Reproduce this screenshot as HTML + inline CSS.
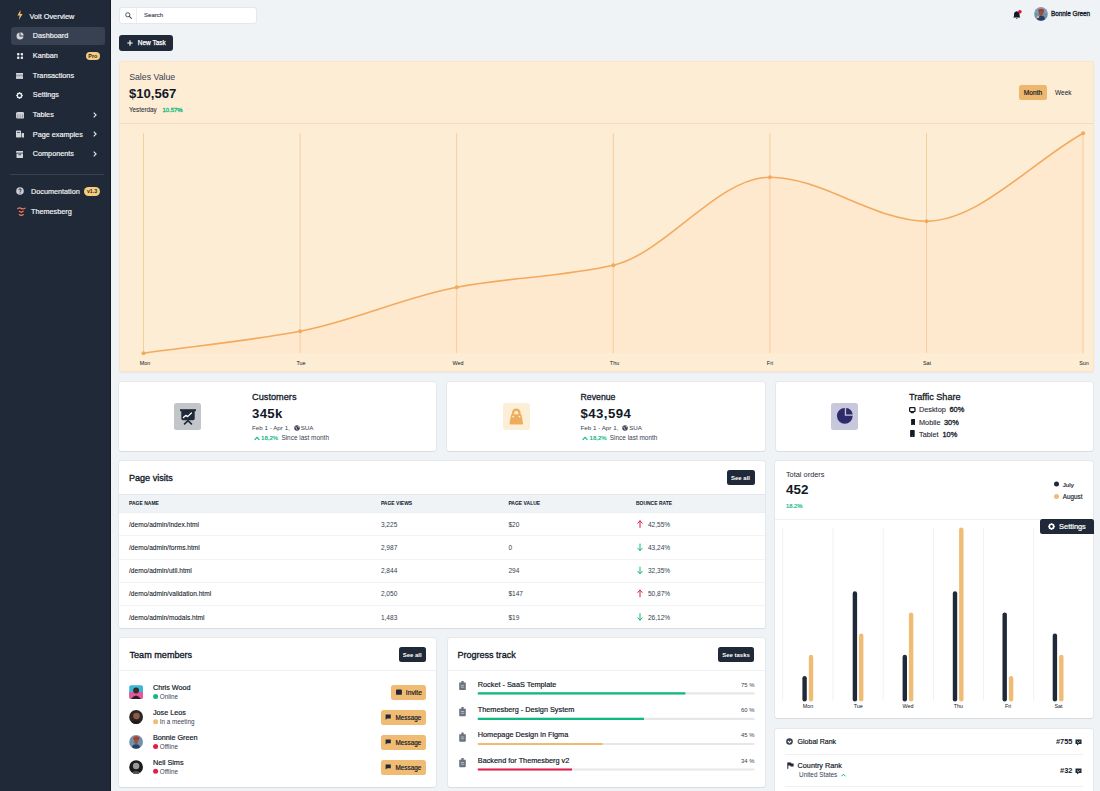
<!DOCTYPE html>
<html><head><meta charset="utf-8">
<style>
*{margin:0;padding:0;box-sizing:border-box}
html,body{width:1100px;height:791px;overflow:hidden;background:#eff3f6;font-family:"Liberation Sans",sans-serif;color:#1f2937}
.a{position:absolute}
.t{position:absolute;line-height:0;white-space:nowrap}
.sb{position:absolute;left:0;top:0;width:111px;height:791px;background:#1f2937;border-right:1px solid #141b26}
.nav{color:#f3f4f6;font-size:7.25px;-webkit-text-stroke:0.18px currentColor}
.card{position:absolute;background:#fff;border-radius:2.5px;box-shadow:0 0 0 1px rgba(0,0,0,0.04),0 1px 1px rgba(0,0,0,0.05)}
.btn{position:absolute;background:#1f2937;color:#fff;border-radius:2.5px;font-weight:bold;font-size:5.6px;text-align:center}
.sbtn{position:absolute;background:#f0bc74;color:#1f2937;border-radius:2.5px;font-size:5.8px}
</style></head><body>
<!-- SIDEBAR -->
<div class="sb">
  <svg class="a" style="left:17px;top:10px" width="6" height="10" viewBox="0 0 6 10"><path d="M3.6 0 L0.4 5.6 L2.7 5.6 L1.8 10 L5.6 3.9 L3.3 3.9 Z" fill="#f0bc74"/></svg>
  <div class="t nav" style="left:29.5px;top:16.8px;font-size:7.33px">Volt Overview</div>
  <div class="a" style="left:10.5px;top:27px;width:94.5px;height:17.5px;background:#374151;border-radius:3px"></div>
  <svg class="a" style="left:16px;top:32px" width="8" height="8" viewBox="0 0 8 8"><path d="M3.5 0.5 A3.5 3.5 0 1 0 7.5 4.5 L3.5 4.5 Z" fill="#d1d5db"/><path d="M4.5 0.3 A3.5 3.5 0 0 1 7.7 3.5 L4.5 3.5 Z" fill="#d1d5db"/></svg>
  <div class="t nav" style="left:32.8px;top:36.2px">Dashboard</div>
  <svg class="a" style="left:16.7px;top:53.1px" width="6.2" height="6" viewBox="0 0 6.2 6" fill="#e5e7eb"><rect x="0" y="0" width="2.5" height="2.4" rx="0.8"/><rect x="3.7" y="0" width="2.5" height="2.4" rx="0.8"/><rect x="0" y="3.6" width="2.5" height="2.4" rx="0.8"/><rect x="3.7" y="3.6" width="2.5" height="2.4" rx="0.8"/></svg>
  <div class="t nav" style="left:32.8px;top:55.5px">Kanban</div>
  <div class="a" style="left:85.5px;top:51.6px;width:14.5px;height:8.8px;background:#f6cd7c;border-radius:4.4px"></div>
  <div class="t" style="left:92.8px;top:56px;font-size:5.4px;font-weight:bold;color:#1f2937;transform:translateX(-50%)">Pro</div>
  <svg class="a" style="left:16.1px;top:72.8px" width="7.4" height="5.8" viewBox="0 0 7.4 5.8"><rect x="0" y="0" width="7.4" height="5.8" rx="0.8" fill="#9ca3af"/><rect x="0" y="0" width="7.4" height="1.6" rx="0.6" fill="#d1d5db"/><rect x="0" y="3.6" width="7.4" height="2.2" rx="0.6" fill="#d1d5db"/></svg>
  <div class="t nav" style="left:32.8px;top:75.6px">Transactions</div>
  <svg class="a" style="left:16.4px;top:92.4px" width="7" height="7" viewBox="0 0 7 7"><circle cx="3.5" cy="3.5" r="2.2" fill="none" stroke="#e5e7eb" stroke-width="1.4"/><g stroke="#e5e7eb" stroke-width="1.2"><path d="M3.5 0.2v1.3M3.5 5.5v1.3M0.2 3.5h1.3M5.5 3.5h1.3M1.2 1.2l0.9 0.9M4.9 4.9l0.9 0.9M1.2 5.8l0.9-0.9M4.9 2.1l0.9-0.9"/></g></svg>
  <div class="t nav" style="left:32.8px;top:95px">Settings</div>
  <svg class="a" style="left:15.9px;top:112px" width="8.2" height="6.6" viewBox="0 0 8.2 6.6"><rect x="0" y="0" width="8.2" height="6.6" rx="1.6" fill="#d1d5db"/><rect x="0.9" y="2.2" width="6.4" height="3.5" rx="0.5" fill="#9ca3af"/><rect x="2.6" y="2.2" width="0.8" height="3.5" fill="#e5e7eb"/><rect x="4.8" y="2.2" width="0.8" height="3.5" fill="#e5e7eb"/></svg>
  <div class="t nav" style="left:32.8px;top:114.6px">Tables</div>
  <svg class="a" style="left:92.5px;top:111.5px" width="4" height="6" viewBox="0 0 4 6"><path d="M0.7 0.6 L3.1 3 L0.7 5.4" fill="none" stroke="#e5e7eb" stroke-width="1.1"/></svg>
  <svg class="a" style="left:16px;top:130px" width="8" height="8" viewBox="0 0 8 8" fill="#d1d5db"><rect x="0" y="0.5" width="5" height="7" rx="0.8"/><rect x="5.6" y="3" width="2.4" height="4.5" rx="0.5"/><rect x="1" y="2" width="3" height="0.7" fill="#1f2937"/></svg>
  <div class="t nav" style="left:32.8px;top:134.5px">Page examples</div>
  <svg class="a" style="left:92.5px;top:131px" width="4" height="6" viewBox="0 0 4 6"><path d="M0.7 0.6 L3.1 3 L0.7 5.4" fill="none" stroke="#e5e7eb" stroke-width="1.1"/></svg>
  <svg class="a" style="left:15.9px;top:150.7px" width="7.6" height="6.9" viewBox="0 0 7.6 6.9" fill="#d1d5db"><rect x="0" y="0" width="7.6" height="1.8" rx="0.4"/><rect x="0.5" y="2.4" width="6.6" height="4.5" rx="0.4"/><rect x="2.5" y="3.4" width="2.6" height="0.8" fill="#1f2937"/></svg>
  <div class="t nav" style="left:32.8px;top:154.3px">Components</div>
  <svg class="a" style="left:92.5px;top:151px" width="4" height="6" viewBox="0 0 4 6"><path d="M0.7 0.6 L3.1 3 L0.7 5.4" fill="none" stroke="#e5e7eb" stroke-width="1.1"/></svg>
  <div class="a" style="left:10px;top:174px;width:94px;height:1px;background:#374151"></div>
  <svg class="a" style="left:15.8px;top:187.3px" width="8" height="8" viewBox="0 0 8 8"><circle cx="4" cy="4" r="3.8" fill="#c9ced6"/><path d="M2.8 3.1 Q2.9 1.9 4 1.9 Q5.2 1.9 5.2 3 Q5.2 3.8 4.2 4.2 L4.2 4.9" fill="none" stroke="#1f2937" stroke-width="0.9"/><circle cx="4.1" cy="6" r="0.55" fill="#1f2937"/></svg>
  <div class="t nav" style="left:31px;top:191.5px">Documentation</div>
  <div class="a" style="left:84px;top:186.8px;width:16px;height:9px;background:#f6cd7c;border-radius:4.5px"></div>
  <div class="t" style="left:92px;top:191.2px;font-size:5.2px;color:#1f2937;transform:translateX(-50%);font-weight:bold">v1.3</div>
  <svg class="a" style="left:17px;top:206.5px" width="9" height="10" viewBox="0 0 9 10" fill="none" stroke="#f2785c" stroke-width="1.2" stroke-linecap="round"><path d="M0.8 1.6 Q2.5 0.3 4.3 1.4 Q6.2 2.4 8 1.2"/><path d="M2.3 4.3 L4.3 5.3 L6.3 4.3"/><path d="M2.3 7.6 L4.3 8.6 L6.3 7.6"/></svg>
  <div class="t nav" style="left:31px;top:211.5px">Themesberg</div>
</div>
<!-- TOPNAV -->
<div class="a" style="left:119px;top:6.5px;width:138px;height:17px;background:#fff;border:1px solid #e5e7eb;border-radius:3px"></div>
<div class="a" style="left:136px;top:7px;width:1px;height:16px;background:#eceef1"></div>
<svg class="a" style="left:124.5px;top:12px" width="7" height="7" viewBox="0 0 7 7"><circle cx="2.8" cy="2.8" r="2.1" fill="none" stroke="#4b5563" stroke-width="1"/><path d="M4.4 4.4 L6.4 6.4" stroke="#4b5563" stroke-width="1.1" stroke-linecap="round"/></svg>
<div class="t" style="left:144px;top:15.4px;font-size:6.05px;color:#4b5563;-webkit-text-stroke:0.18px currentColor;">Search</div>
<svg class="a" style="left:1012.5px;top:9.5px" width="9" height="10" viewBox="0 0 9 10"><path d="M3.7 1.2 Q1 1.7 1 4.5 L1 6.3 L0.2 7.6 L7.4 7.6 L6.6 6.3 L6.6 4.5 Q6.6 1.7 3.9 1.2 Z" fill="#111827"/><path d="M2.7 8.3 Q3.8 9.8 4.9 8.3 Z" fill="#111827"/><circle cx="6.9" cy="1.8" r="1.8" fill="#e3132f"/></svg>
<svg class="a" style="left:1034px;top:7.2px" width="14" height="14" viewBox="0 0 14 14"><defs><clipPath id="av0"><circle cx="7" cy="7" r="6.8"/></clipPath></defs><g clip-path="url(#av0)"><rect width="14" height="14" fill="#6f93ad"/><rect x="0" y="0" width="14" height="6" fill="#7da2b8"/><ellipse cx="7.2" cy="4" rx="3" ry="2.3" fill="#b23a2a"/><ellipse cx="7" cy="6.5" rx="2" ry="2.5" fill="#8a5a44"/><path d="M2 14 L4 9.5 Q7 8 10 9.5 L12 14 Z" fill="#2a3f66"/><circle cx="4" cy="10" r="1.3" fill="#d9b08c"/></g></svg>
<div class="t" style="left:1051px;top:14.3px;font-size:6.35px;color:#111827;-webkit-text-stroke:0.3px currentColor">Bonnie Green</div>
<!-- NEW TASK -->
<div class="btn" style="left:119px;top:34.6px;width:54px;height:16.4px;border-radius:3px"></div>
<svg class="a" style="left:127px;top:39.8px" width="6" height="6" viewBox="0 0 6 6"><path d="M3 0.3V5.7M0.3 3H5.7" stroke="#fff" stroke-width="1.1"/></svg>
<div class="t" style="left:137.8px;top:43.1px;font-size:6.5px;color:#fff;-webkit-text-stroke:0.25px #fff">New Task</div>
<!-- SALES CARD -->
<div class="a" style="left:118.6px;top:61.3px;width:975px;height:310.5px;background:#feedd5;border-radius:2.5px;box-shadow:inset 0 0 0 1px rgba(240,170,90,0.12),0 1px 2px rgba(0,0,0,0.05)"></div>
<div class="t" style="left:129.2px;top:76.5px;font-size:8.74px;color:#374151">Sales Value</div>
<div class="t" style="left:129px;top:93.7px;font-size:13.1px;font-weight:bold;color:#111827">$10,567</div>
<div class="t" style="left:129px;top:110px;font-size:6.3px;color:#1f2937;-webkit-text-stroke:0.06px currentColor">Yesterday</div>
<div class="t" style="left:162.5px;top:110px;font-size:5.95px;color:#10b981;-webkit-text-stroke:0.3px currentColor">10.57%</div>
<div class="a" style="left:1019px;top:84.7px;width:28px;height:15.1px;background:#edb86e;border-radius:2.5px"></div>
<div class="t" style="left:1033px;top:93.1px;font-size:6.6px;color:#111827;transform:translateX(-50%);-webkit-text-stroke:0.18px currentColor;">Month</div>
<div class="t" style="left:1055px;top:93.1px;font-size:6.5px;color:#111827">Week</div>
<div class="a" style="left:118.6px;top:123px;width:975px;height:1px;background:#f2dcc0"></div>
<svg class="a" style="left:0;top:0" width="1100" height="380" viewBox="0 0 1100 380">
 <path d="M143.5,353.2 C195.7,345.9 247.9,341.0 300.1,331.2 C352.3,321.4 404.5,297.0 456.7,287.2 C508.9,277.4 561.1,276.9 613.3,265.2 C665.5,253.5 717.7,177.2 769.9,177.2 C822.1,177.2 874.3,221.2 926.5,221.2 C978.7,221.2 1030.9,162.5 1083.1,133.2 L1083.1,353.2 L143.5,353.2 Z" fill="#fee8ce"/>
 <g stroke="#f6cd9c" stroke-width="1">
  <path d="M143.5 133.2V353.2M300.1 133.2V353.2M456.7 133.2V353.2M613.3 133.2V353.2M769.9 133.2V353.2M926.5 133.2V353.2M1083.1 133.2V353.2"/>
 </g>
 <path d="M143.5,353.2 C195.7,345.9 247.9,341.0 300.1,331.2 C352.3,321.4 404.5,297.0 456.7,287.2 C508.9,277.4 561.1,276.9 613.3,265.2 C665.5,253.5 717.7,177.2 769.9,177.2 C822.1,177.2 874.3,221.2 926.5,221.2 C978.7,221.2 1030.9,162.5 1083.1,133.2" fill="none" stroke="#f2aa5e" stroke-width="1.6"/>
 <g fill="#f2aa5e">
<circle cx="143.5" cy="353.2" r="2"/>
<circle cx="300.1" cy="331.2" r="2"/>
<circle cx="456.7" cy="287.2" r="2"/>
<circle cx="613.3" cy="265.2" r="2"/>
<circle cx="769.9" cy="177.2" r="2"/>
<circle cx="926.5" cy="221.2" r="2"/>
<circle cx="1083.1" cy="133.2" r="2"/>
 </g>
 <g font-family="Liberation Sans" font-size="5.4" fill="#111827" text-anchor="middle">
  <text x="145" y="364.7">Mon</text><text x="301" y="364.7">Tue</text><text x="458" y="364.7">Wed</text><text x="614.5" y="364.7">Thu</text><text x="770" y="364.7">Fri</text><text x="927" y="364.7">Sat</text><text x="1084" y="364.7">Sun</text>
 </g>
</svg>
<!-- STAT CARDS -->
<div class="card" style="left:118.6px;top:382.4px;width:317.8px;height:69px"></div>
<div class="card" style="left:447.2px;top:382.4px;width:317.8px;height:69px"></div>
<div class="card" style="left:775.8px;top:382.4px;width:317.6px;height:69px"></div>
<!-- customers -->
<div class="a" style="left:174.4px;top:403.2px;width:27px;height:27px;background:#c2c5ca;border-radius:2.5px"></div>
<svg class="a" style="left:179.9px;top:409.4px" width="16" height="15.5" viewBox="0 0 16 15.5"><rect x="0" y="0.2" width="16" height="2" fill="#1f2937"/><path d="M1.3 2 H14.7 V9.6 Q14.7 11.2 13.1 11.2 H2.9 Q1.3 11.2 1.3 9.6 Z" fill="#1f2937"/><path d="M3.4 8.6 L5.8 6.4 L7.6 7.6 L11.4 4" fill="none" stroke="#fff" stroke-width="1.3" stroke-linecap="round" stroke-linejoin="round"/><path d="M4.6 14.8 L8 11.6 L11.4 14.8" fill="none" stroke="#1f2937" stroke-width="1.7" stroke-linecap="round"/></svg>
<div class="t" style="left:252.1px;top:396.7px;font-size:9.2px;color:#111827;-webkit-text-stroke:0.28px currentColor">Customers</div>
<div class="t" style="left:252px;top:414px;font-size:13.2px;letter-spacing:0.35px;font-weight:bold;color:#111827">345k</div>
<div class="t" style="left:252px;top:427.7px;font-size:6.25px;color:#374151">Feb 1 - Apr 1,</div><div class="t" style="left:300.7px;top:427.7px;font-size:6.25px;color:#374151">SUA</div>
<svg class="a" style="left:293.6px;top:424.6px" width="6" height="6" viewBox="0 0 6 6"><circle cx="3" cy="3" r="2.75" fill="#374151"/><path d="M1.3 2 Q2.6 2.2 2.4 3.4 L3.2 4.8 M3.4 0.9 Q3.9 2 5.1 2" fill="none" stroke="#fff" stroke-width="0.75"/></svg>
<svg class="a" style="left:253.5px;top:435.5px" width="6" height="5" viewBox="0 0 6 5"><path d="M0.6 3.8 L3 1.4 L5.4 3.8" fill="none" stroke="#10b981" stroke-width="1.1"/></svg>
<div class="t" style="left:261px;top:438.3px;font-size:6.1px;color:#10b981;font-weight:bold">18,2%</div>
<div class="t" style="left:281.4px;top:438.3px;font-size:6.44px;color:#374151">Since last month</div>
<!-- revenue -->
<div class="a" style="left:502.7px;top:403.2px;width:27px;height:27px;background:#fdeed8;border-radius:2.5px"></div>
<svg class="a" style="left:508.9px;top:407.8px" width="14.6" height="17" viewBox="0 0 14.6 17"><path d="M4.1 7.5 V5.2 Q4.1 1.6 7.3 1.6 Q10.5 1.6 10.5 5.2 V7.5" fill="none" stroke="#eead5c" stroke-width="2.1"/><path d="M2.2 6.3 H12.4 L14 15 Q14.1 16.6 12.6 16.6 H2 Q0.5 16.6 0.6 15 Z" fill="#eead5c"/><circle cx="4.1" cy="8.6" r="0.95" fill="#fdeed8"/><circle cx="10.5" cy="8.6" r="0.95" fill="#fdeed8"/></svg>
<div class="t" style="left:580.5px;top:396.8px;font-size:8.74px;color:#111827;-webkit-text-stroke:0.28px currentColor">Revenue</div>
<div class="t" style="left:580.5px;top:414px;font-size:13.2px;letter-spacing:0.45px;font-weight:bold;color:#111827">$43,594</div>
<div class="t" style="left:580.5px;top:427.7px;font-size:6.25px;color:#374151">Feb 1 - Apr 1,</div><div class="t" style="left:629.2px;top:427.7px;font-size:6.25px;color:#374151">SUA</div>
<svg class="a" style="left:622.1px;top:424.6px" width="6" height="6" viewBox="0 0 6 6"><circle cx="3" cy="3" r="2.75" fill="#374151"/><path d="M1.3 2 Q2.6 2.2 2.4 3.4 L3.2 4.8 M3.4 0.9 Q3.9 2 5.1 2" fill="none" stroke="#fff" stroke-width="0.75"/></svg>
<svg class="a" style="left:582px;top:435.5px" width="6" height="5" viewBox="0 0 6 5"><path d="M0.6 3.8 L3 1.4 L5.4 3.8" fill="none" stroke="#10b981" stroke-width="1.1"/></svg>
<div class="t" style="left:589.5px;top:438.3px;font-size:6.1px;color:#10b981;font-weight:bold">18,2%</div>
<div class="t" style="left:609.8px;top:438.3px;font-size:6.44px;color:#374151">Since last month</div>
<!-- traffic -->
<div class="a" style="left:830.9px;top:403.2px;width:27.3px;height:27px;background:#c8c8dc;border-radius:2.5px"></div>
<svg class="a" style="left:836px;top:407px" width="18" height="18" viewBox="0 0 18 18"><path d="M8.8 0.9 A7.9 7.9 0 1 0 16.7 8.8 L8.8 8.8 Z" fill="#2e2b6b"/><path d="M10.1 1.1 A6.6 6.6 0 0 1 16.6 7.6 L10.1 7.6 Z" fill="#2e2b6b"/></svg>
<div class="t" style="left:909px;top:396.8px;font-size:9.1px;color:#111827;-webkit-text-stroke:0.28px currentColor">Traffic Share</div>
<svg class="a" style="left:909.4px;top:407.3px" width="6.6" height="6.3" viewBox="0 0 6.6 6.3"><rect x="0.65" y="0.65" width="5.3" height="3.9" rx="0.7" fill="none" stroke="#111827" stroke-width="1.3"/><path d="M1.8 5.6 H4.8" stroke="#111827" stroke-width="1.2"/></svg>
<div class="t" style="left:919px;top:410.3px;font-size:7.3px;color:#1f2937;-webkit-text-stroke:0.1px currentColor">Desktop</div>
<div class="t" style="left:949.5px;top:410.3px;font-size:7.4px;color:#111827;-webkit-text-stroke:0.3px currentColor">60%</div>
<svg class="a" style="left:910.5px;top:419px" width="4.4" height="6.4" viewBox="0 0 4.4 6.4"><rect x="0.1" y="0.1" width="4.2" height="6.2" rx="0.6" fill="#111827"/><rect x="1.7" y="5" width="1" height="0.6" fill="#9ca3af"/></svg>
<div class="t" style="left:919px;top:422.7px;font-size:7.3px;color:#1f2937;-webkit-text-stroke:0.1px currentColor">Mobile</div>
<div class="t" style="left:944px;top:422.7px;font-size:7.4px;color:#111827;-webkit-text-stroke:0.3px currentColor">30%</div>
<svg class="a" style="left:910.3px;top:430.4px" width="4.8" height="7" viewBox="0 0 4.8 7"><rect x="0.1" y="0.1" width="4.6" height="6.8" rx="0.6" fill="#111827"/><rect x="1.9" y="5.6" width="1" height="0.6" fill="#9ca3af"/></svg>
<div class="t" style="left:919px;top:434.5px;font-size:7.3px;color:#1f2937;-webkit-text-stroke:0.1px currentColor">Tablet</div>
<div class="t" style="left:942.5px;top:434.5px;font-size:7.4px;color:#111827;-webkit-text-stroke:0.3px currentColor">10%</div>
<!-- PAGE VISITS -->
<div class="card" style="left:118.8px;top:461.3px;width:646.2px;height:166.9px;overflow:hidden">
  <div class="a" style="left:0;top:32.6px;width:100%;height:19.3px;background:#eff3f6;border-top:1px solid #e3e7ea;border-bottom:1px solid #eceff1"></div>
  <div class="a" style="left:0;top:74.1px;width:100%;height:1px;background:#f1f3f5"></div>
  <div class="a" style="left:0;top:97.5px;width:100%;height:1px;background:#f1f3f5"></div>
  <div class="a" style="left:0;top:120.9px;width:100%;height:1px;background:#f1f3f5"></div>
  <div class="a" style="left:0;top:143.7px;width:100%;height:1px;background:#f1f3f5"></div>
</div>
<div class="t" style="left:129px;top:477.7px;font-size:9.05px;color:#111827;-webkit-text-stroke:0.32px currentColor">Page visits</div>
<div class="btn" style="left:726.5px;top:470px;width:28px;height:15px;border-radius:2.5px"></div>
<div class="t" style="left:740.5px;top:477.8px;font-size:6px;font-weight:bold;color:#fff;transform:translateX(-50%)">See all</div>
<div class="t" style="left:129px;top:503px;font-size:5px;font-weight:bold;color:#111827">PAGE NAME</div>
<div class="t" style="left:380.9px;top:503px;font-size:5px;font-weight:bold;color:#111827">PAGE VIEWS</div>
<div class="t" style="left:508.4px;top:503px;font-size:5px;font-weight:bold;color:#111827">PAGE VALUE</div>
<div class="t" style="left:635.9px;top:503px;font-size:5px;font-weight:bold;color:#111827">BOUNCE RATE</div>
<div style="font-size:6.6px;color:#111827;-webkit-text-stroke:0.08px currentColor">
<div class="t" style="left:129px;top:524.9px">/demo/admin/index.html</div>
<div class="t" style="left:129px;top:548.0px">/demo/admin/forms.html</div>
<div class="t" style="left:129px;top:571.1px">/demo/admin/util.html</div>
<div class="t" style="left:129px;top:594.2px">/demo/admin/validation.html</div>
<div class="t" style="left:129px;top:617.6px">/demo/admin/modals.html</div>
</div>
<div style="font-size:6.55px;color:#374151">
<div class="t" style="left:380.9px;top:524.9px">3,225</div>
<div class="t" style="left:380.9px;top:548.0px">2,987</div>
<div class="t" style="left:380.9px;top:571.1px">2,844</div>
<div class="t" style="left:380.9px;top:594.2px">2,050</div>
<div class="t" style="left:380.9px;top:617.6px">1,483</div>
<div class="t" style="left:508.4px;top:524.9px">$20</div>
<div class="t" style="left:508.4px;top:548.0px">0</div>
<div class="t" style="left:508.4px;top:571.1px">294</div>
<div class="t" style="left:508.4px;top:594.2px">$147</div>
<div class="t" style="left:508.4px;top:617.6px">$19</div>
<div class="t" style="left:647.9px;top:524.9px">42,55%</div>
<div class="t" style="left:647.9px;top:548.0px">43,24%</div>
<div class="t" style="left:647.9px;top:571.1px">32,35%</div>
<div class="t" style="left:647.9px;top:594.2px">50,87%</div>
<div class="t" style="left:647.9px;top:617.6px">26,12%</div>
</div>
<svg class="a" style="left:0;top:0" width="1100" height="791" viewBox="0 0 1100 791" fill="none" stroke-width="1" stroke-linecap="round">
 <g stroke="#e11d48"><path d="M640 527.5V520.8M637.8 523.2L640 520.8L642.2 523.2"/><path d="M640 596.8V590.1M637.8 592.5L640 590.1L642.2 592.5"/></g>
 <g stroke="#10b981"><path d="M640 544V550.6M637.8 548.2L640 550.6L642.2 548.2"/><path d="M640 567.1V573.7M637.8 571.3L640 573.7L642.2 571.3"/><path d="M640 613.6V620.2M637.8 617.8L640 620.2L642.2 617.8"/></g>
</svg>
<!-- TOTAL ORDERS -->
<div class="card" style="left:775.2px;top:461.2px;width:318.2px;height:256.7px"></div>
<div class="t" style="left:785.9px;top:475.1px;font-size:7.4px;color:#1f2937">Total orders</div>
<div class="t" style="left:786.1px;top:489.8px;font-size:13.4px;font-weight:bold;color:#111827">452</div>
<div class="t" style="left:786px;top:506.1px;font-size:5.8px;color:#10b981;-webkit-text-stroke:0.18px currentColor;">18.2%</div>
<svg class="a" style="left:1053px;top:481px" width="6" height="19" viewBox="0 0 6 19"><circle cx="3.5" cy="3" r="2.5" fill="#1f2937"/><circle cx="3.5" cy="15.6" r="2.5" fill="#f0bc74"/></svg>
<div class="t" style="left:1062.7px;top:484.8px;font-size:6.25px;color:#1f2937;-webkit-text-stroke:0.18px currentColor;">July</div>
<div class="t" style="left:1062.7px;top:497px;font-size:6.35px;color:#1f2937;-webkit-text-stroke:0.18px currentColor;">August</div>
<div class="a" style="left:775.2px;top:518.5px;width:318.2px;height:1px;background:#eef0f2"></div>
<svg class="a" style="left:0;top:0" width="1100" height="791" viewBox="0 0 1100 791">
 <path d="M782.7 527.8V700.6 M833 527.8V700.6 M883.2 527.8V700.6 M933.5 527.8V700.6 M983.4 527.8V700.6 M1033.7 527.8V700.6" stroke="#f0f1f3" stroke-width="1"/>
 <g stroke="#1f2937" stroke-width="4.4" stroke-linecap="round"><path d="M804.6 699.2V678.2"/><path d="M854.9 699.2V593.4"/><path d="M904.8 699.2V657.0"/><path d="M955.0 699.2V593.4"/><path d="M1004.7 699.2V614.6"/><path d="M1054.9 699.2V635.8"/></g>
 <g stroke="#f0bc74" stroke-width="4.4" stroke-linecap="round"><path d="M811.0 699.2V657.0"/><path d="M861.2 699.2V635.8"/><path d="M911.1 699.2V614.6"/><path d="M961.3 699.2V529.8"/><path d="M1011.1 699.2V678.2"/><path d="M1061.3 699.2V657.0"/></g>
 <g font-family="Liberation Sans" font-size="5.4" fill="#111827" text-anchor="middle"><text x="808.1" y="708.3">Mon</text><text x="858.2" y="708.3">Tue</text><text x="908.1" y="708.3">Wed</text><text x="958.4" y="708.3">Thu</text><text x="1008.1" y="708.3">Fri</text><text x="1058.5" y="708.3">Sat</text></g>
</svg>
<div class="a" style="left:1040px;top:519.2px;width:54px;height:15.2px;background:#1f2937;border-radius:2.5px 2.5px 0 2.5px"></div>
<svg class="a" style="left:1047.6px;top:523.2px" width="7" height="7" viewBox="0 0 8 8"><circle cx="4" cy="4" r="2.5" fill="none" stroke="#fff" stroke-width="1.8"/><g stroke="#fff" stroke-width="1.5"><path d="M4 0.3v1.6M4 6.1v1.6M0.3 4h1.6M6.1 4h1.6M1.4 1.4l1.1 1.1M5.5 5.5l1.1 1.1M1.4 6.6l1.1-1.1M5.5 2.5l1.1-1.1"/></g></svg>
<div class="t" style="left:1059.1px;top:527.2px;font-size:7.4px;color:#fff;-webkit-text-stroke:0.22px #fff">Settings</div>
<!-- TEAM MEMBERS -->
<div class="card" style="left:119px;top:638.4px;width:317.4px;height:149.1px"></div>
<div class="t" style="left:129.5px;top:654.6px;font-size:9.1px;color:#111827;-webkit-text-stroke:0.32px currentColor">Team members</div>
<div class="btn" style="left:398.6px;top:647.2px;width:27.3px;height:14.8px"></div>
<div class="t" style="left:412.2px;top:654.8px;font-size:6px;font-weight:bold;color:#fff;transform:translateX(-50%)">See all</div>
<div class="a" style="left:119px;top:670.3px;width:317.4px;height:1px;background:#eef0f2"></div>
<svg class="a" style="left:0;top:0" width="1100" height="791" viewBox="0 0 1100 791">
 <defs>
  <clipPath id="c1"><rect x="129.2" y="685.2" width="13.8" height="13.8" rx="2"/></clipPath>
  <clipPath id="c2"><circle cx="136.1" cy="717" r="6.9"/></clipPath>
  <clipPath id="c3"><circle cx="136.1" cy="741.9" r="6.9"/></clipPath>
  <clipPath id="c4"><circle cx="136.1" cy="767.1" r="6.9"/></clipPath>
 </defs>
 <g clip-path="url(#c1)"><rect x="129" y="685" width="14" height="14" fill="#3db7d6"/><rect x="129" y="692" width="14" height="7" fill="#e4579a"/><circle cx="136.1" cy="690.5" r="3" fill="#3b2a25"/><path d="M131 699 Q136 692 141 699Z" fill="#222"/></g>
 <g clip-path="url(#c2)"><rect x="129" y="710" width="14" height="14" fill="#2c2522"/><circle cx="136.5" cy="716" r="3.3" fill="#8a5c48"/><path d="M129 724 Q136 717 143 724Z" fill="#1b1b1b"/></g>
 <g clip-path="url(#c3)"><rect x="129" y="735" width="14" height="14" fill="#6f93ad"/><ellipse cx="136.3" cy="738.5" rx="3" ry="2.3" fill="#b23a2a"/><ellipse cx="136.1" cy="741.5" rx="2" ry="2.5" fill="#8a5a44"/><path d="M131 749 L133 745 Q136 743.5 139 745 L141 749Z" fill="#2a3f66"/></g>
 <g clip-path="url(#c4)"><rect x="129" y="760" width="14" height="14" fill="#1b1b1b"/><circle cx="136.1" cy="766" r="3.2" fill="#9a9a9a"/><path d="M130 774 Q136 768 142 774Z" fill="#555"/></g>
 <circle cx="155.6" cy="696.5" r="2.5" fill="#10b981"/>
 <circle cx="155.6" cy="721.7" r="2.5" fill="#f0bc74"/>
 <circle cx="155.6" cy="746.6" r="2.5" fill="#e11d48"/>
 <circle cx="155.6" cy="771.2" r="2.5" fill="#e11d48"/>
</svg>
<div class="t" style="left:152.9px;top:688.1px;font-size:7.25px;color:#111827;-webkit-text-stroke:0.18px currentColor;">Chris Wood</div>
<div class="t" style="left:159.8px;top:696.8px;font-size:6.3px;color:#374151">Online</div>
<div class="t" style="left:152.9px;top:712.9px;font-size:7.25px;color:#111827;-webkit-text-stroke:0.18px currentColor;">Jose Leos</div>
<div class="t" style="left:159.8px;top:722px;font-size:6.3px;color:#374151">In a meeting</div>
<div class="t" style="left:152.9px;top:737.8px;font-size:7.25px;color:#111827;-webkit-text-stroke:0.18px currentColor;">Bonnie Green</div>
<div class="t" style="left:159.8px;top:747px;font-size:6.3px;color:#374151">Offline</div>
<div class="t" style="left:152.9px;top:763px;font-size:7.25px;color:#111827;-webkit-text-stroke:0.18px currentColor;">Neil Sims</div>
<div class="t" style="left:159.8px;top:771.5px;font-size:6.3px;color:#374151">Offline</div>
<div class="sbtn" style="left:391.1px;top:684.9px;width:34.8px;height:14.7px"></div>
<div class="sbtn" style="left:380.6px;top:710.1px;width:45.3px;height:14.7px"></div>
<div class="sbtn" style="left:380.6px;top:735px;width:45.3px;height:14.7px"></div>
<div class="sbtn" style="left:380.6px;top:759.9px;width:45.3px;height:14.7px"></div>
<svg class="a" style="left:0;top:0" width="1100" height="791" viewBox="0 0 1100 791" fill="#1f2937">
 <rect x="396" y="689.6" width="5.9" height="5.2" rx="0.9"/>
 <path d="M385.6 714.6 h5.2 v3.8 h-3.6 l-1.6 1.3 Z"/>
 <path d="M385.6 739.5 h5.2 v3.8 h-3.6 l-1.6 1.3 Z"/>
 <path d="M385.6 764.4 h5.2 v3.8 h-3.6 l-1.6 1.3 Z"/>
</svg>
<div class="t" style="left:405.8px;top:693.1px;font-size:6.75px;color:#111827;-webkit-text-stroke:0.18px currentColor;">Invite</div>
<div class="t" style="left:395.5px;top:717.9px;font-size:6.36px;color:#111827;-webkit-text-stroke:0.18px currentColor;">Message</div>
<div class="t" style="left:395.5px;top:742.8px;font-size:6.36px;color:#111827;-webkit-text-stroke:0.18px currentColor;">Message</div>
<div class="t" style="left:395.5px;top:767.7px;font-size:6.36px;color:#111827;-webkit-text-stroke:0.18px currentColor;">Message</div>
<!-- PROGRESS TRACK -->
<div class="card" style="left:447.5px;top:638.4px;width:317.5px;height:149.1px"></div>
<div class="t" style="left:457.4px;top:654.6px;font-size:9.05px;color:#111827;-webkit-text-stroke:0.32px currentColor">Progress track</div>
<div class="btn" style="left:717.5px;top:647.2px;width:36.9px;height:14.8px"></div>
<div class="t" style="left:736px;top:654.8px;font-size:6px;font-weight:bold;color:#fff;transform:translateX(-50%)">See tasks</div>
<div class="a" style="left:447.5px;top:670.3px;width:317.5px;height:1px;background:#eef0f2"></div>
<svg class="a" style="left:0;top:0" width="1100" height="791" viewBox="0 0 1100 791">
 <g fill="#6b7280"><path d="M459.2 682.6 h6.6 v6.6 q0 0.9 -0.9 0.9 h-4.8 q-0.9 0 -0.9 -0.9 Z"/><rect x="461.3" y="681.0" width="2.4" height="2.4" rx="0.5"/><path d="M459.2 708.7 h6.6 v6.6 q0 0.9 -0.9 0.9 h-4.8 q-0.9 0 -0.9 -0.9 Z"/><rect x="461.3" y="707.1" width="2.4" height="2.4" rx="0.5"/><path d="M459.2 734.2 h6.6 v6.6 q0 0.9 -0.9 0.9 h-4.8 q-0.9 0 -0.9 -0.9 Z"/><rect x="461.3" y="732.6" width="2.4" height="2.4" rx="0.5"/><path d="M459.2 759.7 h6.6 v6.6 q0 0.9 -0.9 0.9 h-4.8 q-0.9 0 -0.9 -0.9 Z"/><rect x="461.3" y="758.1" width="2.4" height="2.4" rx="0.5"/></g>
 <g stroke="#d1d5db" stroke-width="0.7"><path d="M460.8 685.4h3.4M460.8 687.2h3.4"/><path d="M460.8 711.5h3.4M460.8 713.3h3.4"/><path d="M460.8 737.0h3.4M460.8 738.8h3.4"/><path d="M460.8 762.5h3.4M460.8 764.3h3.4"/></g>
 <g stroke-width="2.2">
  <path d="M477.8 693.3H754.4M477.8 718.8H754.4M477.8 744H754.4M477.8 769.5H754.4" stroke="#e5e7eb"/>
  <path d="M477.8 693.3H685.4M477.8 718.8H644" stroke="#10b981"/>
  <path d="M477.8 744H602.6" stroke="#f0bc74"/>
  <path d="M477.8 769.5H572" stroke="#e11d48"/>
 </g>
</svg>
<div class="t" style="left:477.8px;top:684.6px;font-size:7.3px;color:#111827;-webkit-text-stroke:0.18px currentColor;">Rocket - SaaS Template</div>
<div class="t" style="left:477.8px;top:710.1px;font-size:7.3px;color:#111827;-webkit-text-stroke:0.18px currentColor;">Themesberg - Design System</div>
<div class="t" style="left:477.8px;top:735.3px;font-size:7.3px;color:#111827;-webkit-text-stroke:0.18px currentColor;">Homepage Design in Figma</div>
<div class="t" style="left:477.8px;top:760.8px;font-size:7.3px;color:#111827;-webkit-text-stroke:0.18px currentColor;">Backend for Themesberg v2</div>
<div style="font-size:5.9px;color:#374151">
<div class="t" style="right:345.6px;top:684.6px">75 %</div>
<div class="t" style="right:345.6px;top:710.1px">60 %</div>
<div class="t" style="right:345.6px;top:735.3px">45 %</div>
<div class="t" style="right:345.6px;top:760.8px">34 %</div>
</div>
<!-- RANK -->
<div class="card" style="left:775.4px;top:728.6px;width:318px;height:70px"></div>
<svg class="a" style="left:786.4px;top:738.4px" width="7" height="7" viewBox="0 0 7 7"><circle cx="3.5" cy="3.5" r="3.3" fill="#374151"/><path d="M1.9 2.9 L3.5 4.6 L5.1 2.9" stroke="#fff" stroke-width="1.1" fill="none"/></svg>
<div class="t" style="left:797.6px;top:742.2px;font-size:7px;color:#111827;-webkit-text-stroke:0.18px currentColor;">Global Rank</div>
<div class="t" style="right:27.6px;top:742.2px;font-size:7.4px;color:#111827;font-weight:bold">#755</div>
<svg class="a" style="left:1074.5px;top:738.5px" width="7" height="7" viewBox="0 0 7 7"><path d="M0.5 0.5 H6.5 V5 H3.8 L2 6.6 V5 H0.5Z" fill="#1f2937"/><path d="M2 2.5 L3.5 3.7 L5 2.2" stroke="#fff" stroke-width="0.7" fill="none"/></svg>
<div class="a" style="left:785px;top:754.2px;width:298px;height:1px;background:#eef0f2"></div>
<svg class="a" style="left:786.5px;top:762px" width="7" height="7" viewBox="0 0 7 7"><path d="M0.8 0.4 V6.8" stroke="#1f2937" stroke-width="1"/><path d="M1 0.6 H4 L4.5 1.4 H6.6 V4.4 H3.6 L3.1 3.6 H1Z" fill="#1f2937"/></svg>
<div class="t" style="left:797.6px;top:765.8px;font-size:7.25px;color:#111827;-webkit-text-stroke:0.18px currentColor;">Country Rank</div>
<div class="t" style="left:799.1px;top:774.8px;font-size:6.35px;color:#374151">United States</div>
<svg class="a" style="left:840.5px;top:772.5px" width="5" height="4" viewBox="0 0 5 4"><path d="M0.5 3.3 L2.5 1.2 L4.5 3.3" stroke="#10b981" stroke-width="1" fill="none"/></svg>
<div class="t" style="right:27.6px;top:770.9px;font-size:7.4px;color:#111827;font-weight:bold">#32</div>
<svg class="a" style="left:1074.5px;top:767.5px" width="7" height="7" viewBox="0 0 7 7"><path d="M0.5 0.5 H6.5 V5 H3.8 L2 6.6 V5 H0.5Z" fill="#1f2937"/><path d="M2 2.5 L3.5 3.7 L5 2.2" stroke="#fff" stroke-width="0.7" fill="none"/></svg>
<div class="a" style="left:785px;top:786.3px;width:298px;height:1px;background:#eef0f2"></div>
</body></html>
